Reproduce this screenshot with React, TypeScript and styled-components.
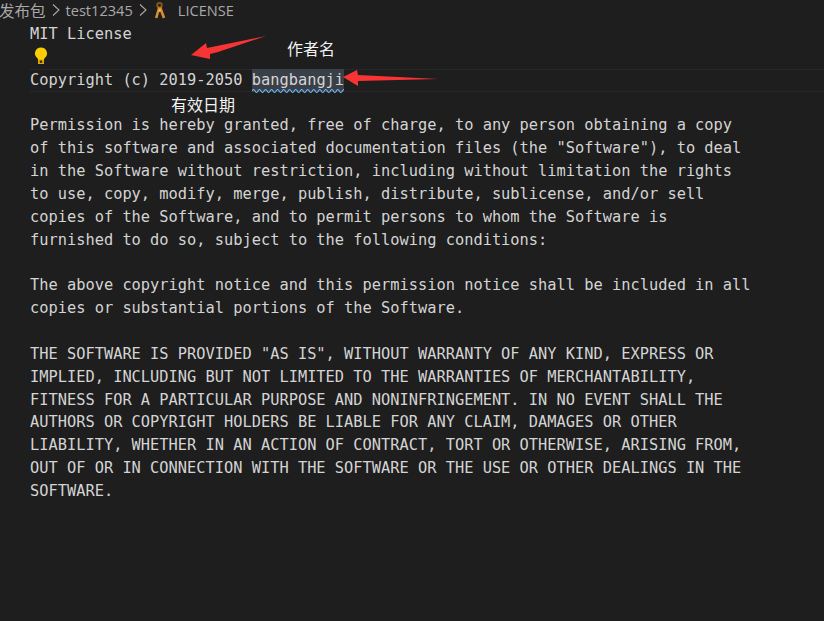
import React from 'react';
import styled, { createGlobalStyle } from 'styled-components';

const GlobalStyle = createGlobalStyle`
    html, body {
        margin: 0;
        padding: 0;
        background-color: #1e1e1e;
    }
`

const Page = styled.div`
    position: relative;
    width: 824px;
    height: 621px;
    overflow: hidden;
    background-color: #1e1e1e;
`

const Breadcrumbs = styled.div`
    display: flex;
    align-items: center;
    height: 20px;
    margin: 0 0 2px -1px;
    font-family: "Noto Sans CJK SC", "Open Sans", sans-serif;
    font-size: 15.5px;
    color: #a9a9a9;
    white-space: nowrap;
`

const Crumb = styled.span`
    font-family: "Open Sans", "Noto Sans CJK SC", sans-serif;
    font-size: 14.6px;
`

const Chevron = styled.svg`
    width: 20px;
    height: 16px;
    flex: none;
`

const KeyIcon = styled.svg`
    width: 12px;
    height: 17px;
    margin: 0 12px 0 1px;
    flex: none;
`

const Editor = styled.div`
    padding: 1px 0 0 30px;
    font-family: "DejaVu Sans Mono", "Liberation Mono", monospace;
    font-size: 15.35px;
    line-height: 22.85px;
    color: #d4d4d4;
`

const Line = styled.div<{ $active?: boolean }>`
    position: relative;
    height: 22.85px;
    white-space: pre;
    box-sizing: border-box;
    ${(p) => p.$active && `
        box-shadow: inset 0 1px 0 #282828, inset 0 -1px 0 #282828;
    `}
`

const Selected = styled.span`
    position: relative;
    display: inline-block;
    height: 22.85px;
    background-color: #3a4048;
`

const Squiggle = styled.svg`
    position: absolute;
    left: 0;
    bottom: -1px;
    width: 100%;
    height: 4px;
    display: block;
`

const Bulb = styled.svg`
    position: absolute;
    left: 4px;
    top: 1px;
    width: 14px;
    height: 18px;
`

const Note = styled.span<{ $left: number; $top: number }>`
    position: absolute;
    left: ${(p) => p.$left}px;
    top: ${(p) => p.$top}px;
    font-family: "Noto Sans CJK SC", sans-serif;
    font-size: 16px;
    line-height: 20px;
    color: #f2f2f2;
`

const Arrow = styled.svg`
    position: absolute;
    left: 0;
    top: 0;
    width: 824px;
    height: 621px;
    pointer-events: none;
`

const licenseBody = [
    '',
    'Permission is hereby granted, free of charge, to any person obtaining a copy',
    'of this software and associated documentation files (the "Software"), to deal',
    'in the Software without restriction, including without limitation the rights',
    'to use, copy, modify, merge, publish, distribute, sublicense, and/or sell',
    'copies of the Software, and to permit persons to whom the Software is',
    'furnished to do so, subject to the following conditions:',
    '',
    'The above copyright notice and this permission notice shall be included in all',
    'copies or substantial portions of the Software.',
    '',
    'THE SOFTWARE IS PROVIDED "AS IS", WITHOUT WARRANTY OF ANY KIND, EXPRESS OR',
    'IMPLIED, INCLUDING BUT NOT LIMITED TO THE WARRANTIES OF MERCHANTABILITY,',
    'FITNESS FOR A PARTICULAR PURPOSE AND NONINFRINGEMENT. IN NO EVENT SHALL THE',
    'AUTHORS OR COPYRIGHT HOLDERS BE LIABLE FOR ANY CLAIM, DAMAGES OR OTHER',
    'LIABILITY, WHETHER IN AN ACTION OF CONTRACT, TORT OR OTHERWISE, ARISING FROM,',
    'OUT OF OR IN CONNECTION WITH THE SOFTWARE OR THE USE OR OTHER DEALINGS IN THE',
    'SOFTWARE.',
]

const ChevronIcon = () => (
    <Chevron viewBox="0 0 20 16">
        <path d="M7 2.5l6 5.5-6 5.5" fill="none" stroke="#a9a9a9" strokeWidth="1.1" />
    </Chevron>
)

export default function App() {
    return (
        <Page>
            <GlobalStyle />
            <Breadcrumbs>
                发布包
                <ChevronIcon />
                <Crumb>test12345</Crumb>
                <ChevronIcon />
                <KeyIcon viewBox="0 0 12 17">
                    <circle cx="5.5" cy="3.2" r="2.3" fill="none" stroke="#8a5a1c" strokeWidth="1.8" />
                    <path d="M5.2 5.5L2.2 16M6.2 5.5L10 16" fill="none" stroke="#d98f2e" strokeWidth="2.6" />
                    <path d="M5.7 7v3" stroke="#f0b04a" strokeWidth="2" />
                </KeyIcon>
                <Crumb>LICENSE</Crumb>
            </Breadcrumbs>
            <Editor>
                <Line>MIT License</Line>
                <Line>
                    <Bulb viewBox="0 0 14 18">
                        <path d="M7 0.5a6 6 0 0 0-3.6 10.8c.5.5.6 1 .6 1.7h6c0-.7.1-1.2.6-1.7A6 6 0 0 0 7 0.5z" fill="#ffcc00" />
                        <path d="M4 12.5h6V17H4z" fill="#e0a800" />
                        <path d="M5.8 13.5h2.4v2.4H5.8z" fill="#3a3210" />
                    </Bulb>
                </Line>
                <Line $active>
                    Copyright (c) 2019-2050{' '}
                    <Selected>
                        bangbangji
                        <Squiggle viewBox="0 0 92 4" preserveAspectRatio="none">
                            <path
                                d={'M0 2' + ' q1.5 -3 3 0 t3 0'.repeat(16)}
                                fill="none"
                                stroke="#75beff"
                                strokeWidth="1"
                            />
                        </Squiggle>
                    </Selected>
                </Line>
                {licenseBody.map((text, i) => (
                    <Line key={i}>{text}</Line>
                ))}
            </Editor>
            <Note $left={287} $top={38}>作者名</Note>
            <Note $left={171} $top={94}>有效日期</Note>
            <Arrow viewBox="0 0 824 621">
                <path d="M191 55L206 43L207 48L266 36L218 52L210 54L210 59Z" fill="#fa3434" />
                <path d="M343 77L357 70L358 75L438 79L358 81L358 86Z" fill="#fa3434" />
            </Arrow>
        </Page>
    )
}
